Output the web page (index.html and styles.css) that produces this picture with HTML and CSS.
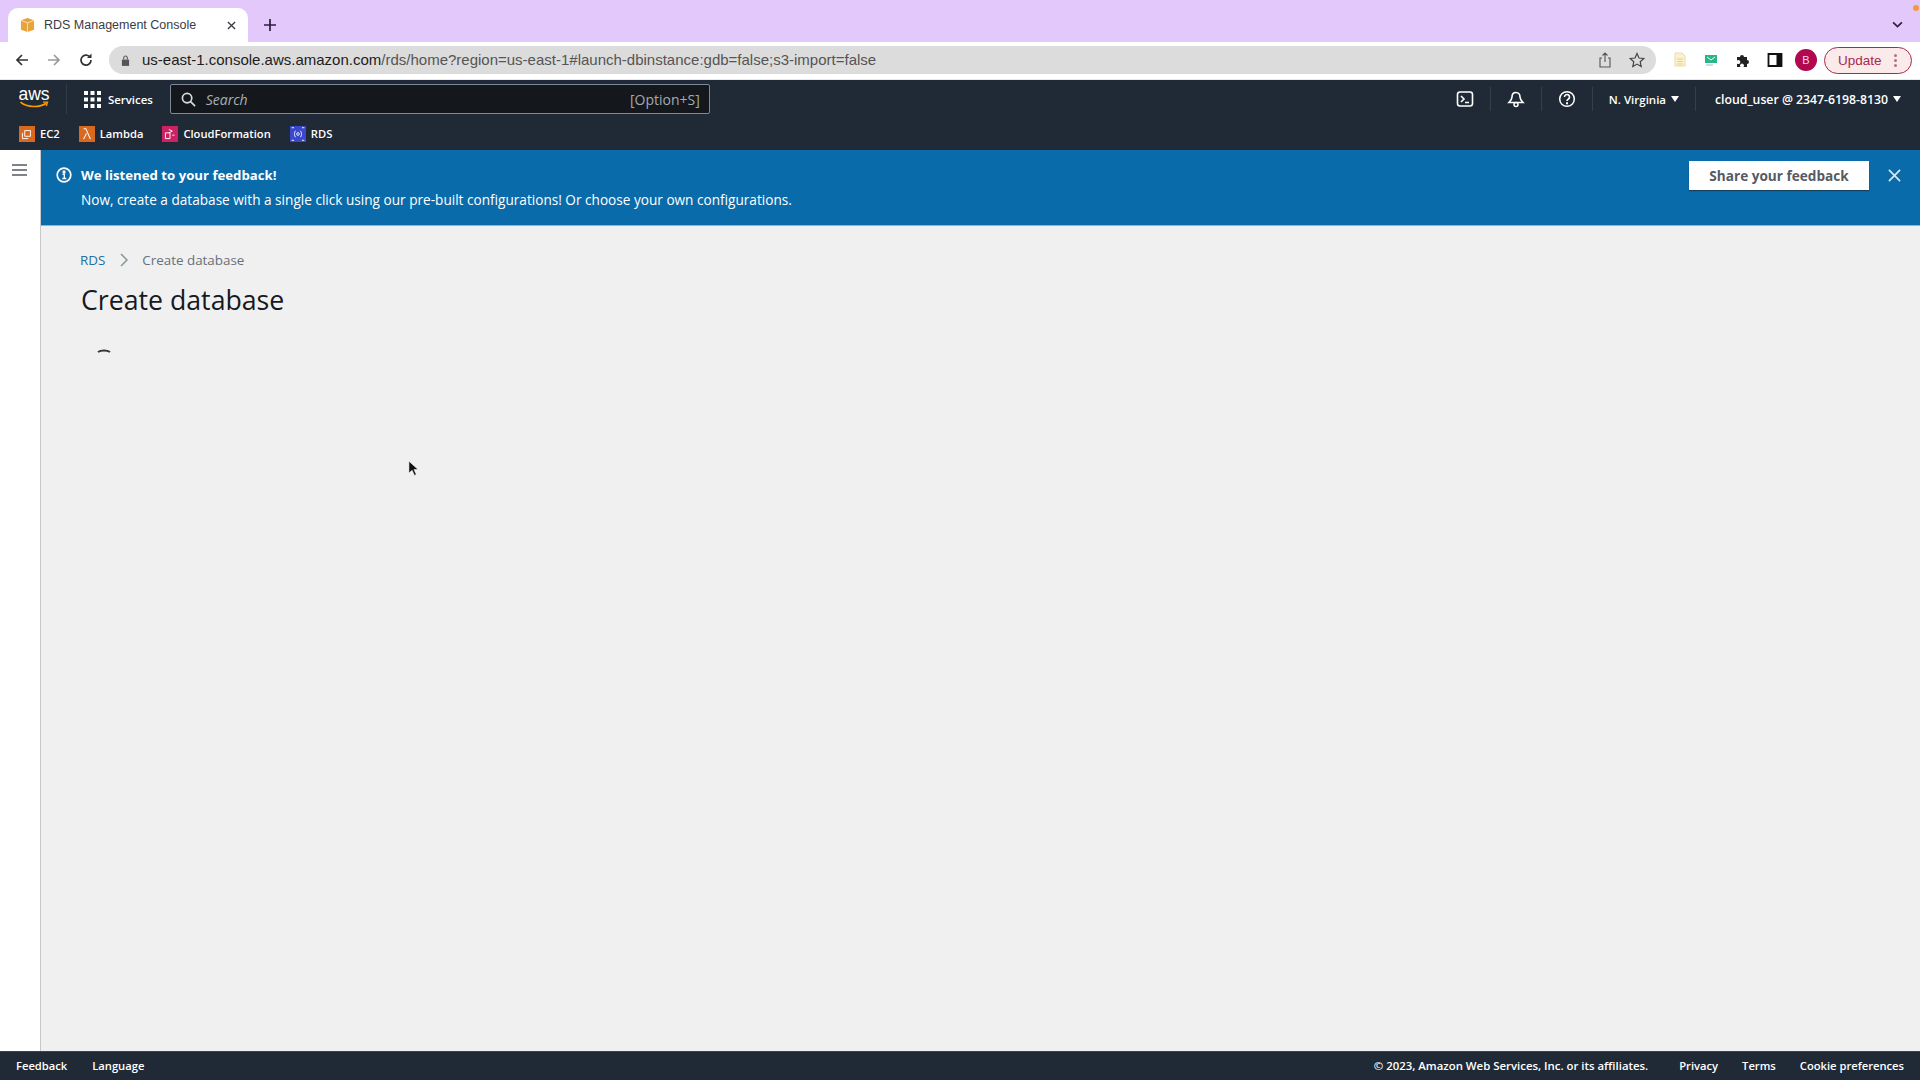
FILE: index.html
```
<!DOCTYPE html>
<html lang="en">
<head>
<meta charset="utf-8">
<title>RDS Management Console</title>
<link rel="stylesheet" href="styles.css">
</head>
<body>
<div class="tabstrip">
  <div class="tab">
    <svg class="fav" viewBox="0 0 16 16"><path d="M8 0.500l7 2.500v10L8 15.500 1 13V3z" fill="#e8a33d"/><path d="M1 3l7 2.800L15 3M8 5.800v9.700" stroke="#fbe3b5" fill="none"/></svg>
    <span class="tabtitle">RDS Management Console</span>
    <svg class="tabx" viewBox="0 0 10 10"><path d="M1 1l8 8M9 1l-8 8" stroke="#3c3c44" stroke-width="1.500"/></svg>
  </div>
  <svg class="newtab" viewBox="0 0 12 12"><path d="M6 0v12M0 6h12" stroke="#2c1f3d" stroke-width="1.700"/></svg>
  <div class="stripend">
    <svg class="chev" viewBox="0 0 10 6"><path d="M1 1l4 4 4-4" stroke="#2c1f3d" stroke-width="1.500" fill="none"/></svg>
  </div>
  <span class="orangedot"></span>
</div>
<div class="toolbar">
  <svg class="tool" viewBox="0 0 16 16"><path d="M14 8H3M8 3L3 8l5 5" stroke="#333" stroke-width="1.700" fill="none"/></svg>
  <svg class="tool" viewBox="0 0 16 16"><path d="M2 8h11M8 3l5 5-5 5" stroke="#9a9a9a" stroke-width="1.700" fill="none"/></svg>
  <svg class="tool" viewBox="0 0 16 16"><path d="M13 8a5 5 0 1 1-1.500-3.500" stroke="#333" stroke-width="1.700" fill="none"/><path d="M13.500 1.500v4.500H9z" fill="#333"/></svg>
  <div class="omnibox">
    <svg class="lock" viewBox="0 0 10 12"><path d="M1 5h8v7H1z" fill="#555"/><path d="M3 5V3a2 2 0 0 1 4 0v2" stroke="#555" stroke-width="1.200" fill="none"/></svg>
    <span class="url"><span class="urlhost">us-east-1.console.aws.amazon.com</span>/rds/home?region=us-east-1#launch-dbinstance:gdb=false;s3-import=false</span>
    <svg class="omnicon share" viewBox="0 0 14 16"><path d="M4 6H2v9h10V6h-2M7 10V1M4.500 3.500L7 1l2.500 2.500" stroke="#555" stroke-width="1.100" fill="none"/></svg>
    <svg class="omnicon star" viewBox="0 0 16 16"><path d="M8 1.500l2 4.500 4.800.5-3.600 3.200 1 4.800L8 12.100 3.800 14.500l1-4.800L1.200 6.500 6 6z" stroke="#444" stroke-width="1.200" fill="none"/></svg>
  </div>
  <div class="exts">
    <svg class="ext" viewBox="0 0 16 16"><path d="M4 1h7l3 3v10H4z" fill="#fbf1cf" stroke="#eadca8"/><path d="M6 7h6M6 9.500h6M6 12h6" stroke="#e0cf96"/></svg>
    <svg class="ext" viewBox="0 0 16 16"><path d="M2 3h12v8H2z" fill="#2bb38a"/><path d="M4 5l4 3 4-3" stroke="#fff" fill="none"/><path d="M3 13h7" stroke="#9bc" stroke-width="1"/></svg>
    <svg class="ext" viewBox="0 0 16 16"><path d="M2 5h3a2 2 0 1 1 4 0h3v3a2 2 0 1 1 0 4v3H8.500a2 2 0 1 0-3 0H2v-3.500a2 2 0 1 0 0-3z" fill="#222"/></svg>
    <svg class="ext" viewBox="0 0 16 16"><path d="M1.500 2h13v12h-13z" fill="#fff" stroke="#111" stroke-width="1.800"/><path d="M9.500 2h5v12h-5z" fill="#111"/></svg>
    <span class="avatar">B</span>
    <span class="update">Update<span class="updots"><i></i><i></i><i></i></span></span>
  </div>
</div>
<header class="awsnav">
  <div class="navrow1">
    <div class="awslogo">
      <span class="awstext">aws</span>
      <svg class="smile" viewBox="0 0 26 8"><path d="M1 1c6 5 17 5 23 1" stroke="#f90" stroke-width="1.500" fill="none"/><path d="M21 1l4 0-1 3.500" stroke="#f90" stroke-width="1.200" fill="none"/></svg>
    </div>
    <span class="navsep"></span>
    <svg class="grid" viewBox="0 0 17 17"><path d="M0 0h4v4H0zM6.500 0h4v4h-4zM13 0h4v4h-4zM0 6.500h4v4H0zM6.500 6.500h4v4h-4zM13 6.500h4v4h-4zM0 13h4v4H0zM6.500 13h4v4h-4zM13 13h4v4h-4z" fill="#fff"/></svg>
    <span class="services">Services</span>
    <div class="searchbox">
      <svg class="searchicon" viewBox="0 0 16 16"><circle cx="6.500" cy="6.500" r="5" stroke="#d5dbdb" stroke-width="1.800" fill="none"/><path d="M10 10l5 5" stroke="#d5dbdb" stroke-width="1.800"/></svg>
      <span class="searchph">Search</span>
      <span class="searchkey">[Option+S]</span>
    </div>
    <div class="navright">
      <div class="navicon"><svg viewBox="0 0 18 18"><rect x="1.500" y="2" width="15" height="14" rx="2.500" stroke="#fff" stroke-width="1.600" fill="none"/><path d="M5 6l3 3-3 3M9 12.500h4" stroke="#fff" stroke-width="1.600" fill="none"/></svg></div>
      <span class="navdiv"></span>
      <div class="navicon"><svg viewBox="0 0 18 18"><path d="M9 2.500c-2.500 0-4 2-4 4.500 0 2-1 3.500-3 5.500h14c-2-2-3-3.500-3-5.500 0-2.500-1.500-4.500-4-4.500z" stroke="#fff" stroke-width="1.600" fill="none"/><circle cx="9" cy="14.500" r="2" fill="none" stroke="#fff" stroke-width="1.500"/></svg></div>
      <span class="navdiv"></span>
      <div class="navicon"><svg viewBox="0 0 18 18"><circle cx="9" cy="9" r="7.300" stroke="#fff" stroke-width="1.500" fill="none"/><path d="M6.500 7a2.500 2.500 0 1 1 3.800 2.100c-.9.600-1.300 1-1.300 2" stroke="#fff" stroke-width="1.600" fill="none"/><path d="M8 12.300h2v2H8z" fill="#fff"/></svg></div>
      <span class="navdiv"></span>
      <span class="navmenu region">N. Virginia<i class="caret"></i></span>
      <span class="navdiv"></span>
      <span class="navmenu account">cloud_user @ 2347-6198-8130<i class="caret"></i></span>
    </div>
  </div>
  <div class="navrow2">
    <span class="fav2"><svg class="svc" viewBox="0 0 14 14"><rect width="14" height="14" fill="#d9691e"/><path d="M5 4h5v5H5zM3 6v5h5" stroke="#fff" stroke-width=".8" fill="none"/></svg>EC2</span>
    <span class="fav2"><svg class="svc" viewBox="0 0 14 14"><rect width="14" height="14" fill="#d9691e"/><path d="M4 2.500h2l4 9M6.500 6.500L4 11.500" stroke="#fff" stroke-width=".9" fill="none"/></svg>Lambda</span>
    <span class="fav2"><svg class="svc" viewBox="0 0 14 14"><rect width="14" height="14" fill="#cc2264"/><path d="M3 6h4v5H3zM6 3l3 1.500L6 6M9 8h2" stroke="#fff" stroke-width=".8" fill="none"/></svg>CloudFormation</span>
    <span class="fav2"><svg class="svc" viewBox="0 0 14 14"><rect width="14" height="14" fill="#3b48cc"/><path d="M5 4.500c-1.500 0-.5 2.500-1.500 2.500 1 0 0 2.500 1.500 2.500M9 4.500c1.500 0 .5 2.500 1.500 2.500-1 0 0 2.500-1.500 2.500M1.500 1.500h2M10.500 1.500h2M1.500 12.500h2M10.500 12.500h2" stroke="#fff" stroke-width=".8" fill="none"/><circle cx="7" cy="7" r="1.200" fill="none" stroke="#fff" stroke-width=".7"/></svg>RDS</span>
  </div>
</header>
<div class="main">
  <aside class="sidebar">
    <svg class="burger" viewBox="0 0 15 12"><path d="M0 1h15M0 6h15M0 11h15" stroke="#545b64" stroke-width="1.600"/></svg>
  </aside>
  <div class="content">
    <div class="banner">
      <svg class="infoicon" viewBox="0 0 16 16"><circle cx="8" cy="8" r="6.800" stroke="#fff" stroke-width="1.700" fill="none"/><path d="M6.500 7.300H8.300v4M6.300 11.500h4M7.300 4.200h1.500v1.600H7.300z" stroke="#fff" stroke-width="1.300" fill="none"/></svg>
      <div class="bannertext">
        <div class="bannertitle">We listened to your feedback!</div>
        <div class="bannerbody">Now, create a database with a single click using our pre-built configurations! Or choose your own configurations.</div>
      </div>
      <span class="sharebtn">Share your feedback</span>
      <svg class="closex" viewBox="0 0 14 14"><path d="M1 1l12 12M13 1L1 13" stroke="#d5e9f5" stroke-width="1.800"/></svg>
    </div>
    <div class="page">
      <nav class="crumbs">
        <span class="crumblink">RDS</span>
        <svg class="crumbsep" viewBox="0 0 8 14"><path d="M1 1l6 6-6 6" stroke="#879596" stroke-width="1.500" fill="none"/></svg>
        <span class="crumbcur">Create database</span>
      </nav>
      <h1 class="title">Create database</h1>
      <svg class="spinner" viewBox="0 0 14 4"><path d="M1 3c3-2 9-2 12 0" stroke="#333" stroke-width="2" fill="none"/></svg>
    </div>
    <svg class="cursor" viewBox="0 0 12 18"><path d="M1 1v13l3.500-3 2.500 5.500 2-1-2.500-5.300H11z" fill="#111" stroke="#fff" stroke-width=".6"/></svg>
  </div>
</div>
<footer class="foot">
  <span class="footl">Feedback</span>
  <span class="footl">Language</span>
  <span class="copy">© 2023, Amazon Web Services, Inc. or its affiliates.</span>
  <span class="footr">Privacy</span>
  <span class="footr">Terms</span>
  <span class="footr">Cookie preferences</span>
</footer>
</body>
</html>
```
FILE: styles.css
```
* { box-sizing: border-box; }
html, body { margin: 0; height: 100%; overflow: hidden; }
body { display: flex; flex-direction: column; width: 1920px; height: 1080px; background: #fff; font-family: "Open Sans", "Noto Sans", sans-serif; }
.tabstrip { height: 42px; background: #e3c8fc; display: flex; align-items: flex-end; padding-left: 8px; position: relative; flex: none; }
.tab { width: 240px; height: 34px; background: #fff; border-radius: 10px 10px 0 0; display: flex; align-items: center; padding: 0 12px 0 12px; }
.fav { width: 15px; height: 16px; margin-right: 9px; margin-left: 0; }
.tabtitle { font: 12.500px "Liberation Sans", Arial, sans-serif; color: #3c3c44; flex: 1; white-space: nowrap; }
.tabx { width: 9px; height: 9px; }
.newtab { width: 12px; height: 12px; margin: 0 0 11px 16px; }
.stripend { margin-left: auto; padding: 0 17px 14px 0; display: flex; }
.chev { width: 11px; height: 7px; }
.orangedot { position: absolute; right: 1px; top: 5px; width: 6px; height: 6px; background: #ef9b3d; border-radius: 50%; }
.toolbar { height: 37px; flex: none; background: #fff; display: flex; align-items: center; padding: 4px 8px 5px 14px; }
.tool { width: 16px; height: 16px; margin-right: 16px; }
.tool:nth-child(3) { margin-right: 15px; }
.omnibox { width: 1547px; height: 28px; background: #dcdcdc; border-radius: 14px; display: flex; align-items: center; padding: 0 11px 0 12px; }
.lock { width: 9px; height: 11px; margin-right: 12px; }
.url { font: 15px/17px "Liberation Sans", Arial, sans-serif; color: #555; flex: 1; white-space: nowrap; padding-bottom: 1px; }
.urlhost { color: #1d1d1d; }
.omnicon { height: 16px; width: 14px; }
.share { margin-right: 17px; }
.star { width: 16px; }
.exts { display: flex; align-items: center; margin-left: 15px; }
.ext { width: 16px; height: 16px; margin-right: 16px; }
.avatar { width: 22px; height: 22px; border-radius: 50%; background: #b1084f; color: #f7d9e4; font: 11px "Liberation Sans", Arial, sans-serif; display: flex; align-items: center; justify-content: center; margin: 0 7px 0 -4px; }
.update { width: 88px; height: 27px; border: 1px solid #a8284f; border-radius: 14px; background: #fbeaea; color: #a8284f; font: 13.500px "Liberation Sans", Arial, sans-serif; display: flex; align-items: center; padding-left: 13px; position: relative; }
.updots { display: flex; flex-direction: column; gap: 2px; margin-left: 12px; }
.updots i { width: 3px; height: 3px; border-radius: 50%; background: #b0728a; }
.awsnav { background: #1f2a36; height: 71px; flex: none; border-top: 1px solid #e8e8e8; }
.navrow1 { height: 38px; display: flex; align-items: center; padding-left: 18px; color: #fff; }
.awslogo { width: 32px; height: 30px; position: relative; display: flex; flex-direction: column; align-items: center; }
.awstext { font: 17.500px/18px "Liberation Sans", Arial, sans-serif; color: #fff; margin-top: 1px; }
.smile { width: 32px; height: 9px; margin-top: -2px; }
.navsep { width: 1px; height: 30px; background: #2f3b48; margin: 0 17px 0 16px; }
.grid { width: 17px; height: 17px; }
.services { font-size: 11.400px; font-weight: 600; margin: 0 17px 0 7px; color: #fff; }
.searchbox { width: 540px; height: 30px; background: #14181c; border: 1px solid #7d8998; border-radius: 2px; display: flex; align-items: center; padding: 0 9px 0 10px; }
.searchicon { width: 15px; height: 15px; }
.searchph { font-size: 14px; font-style: italic; color: #a9b0b5; margin-left: 10px; flex: 1; }
.searchkey { font-size: 14px; color: #a3aab0; }
.navright { margin-left: auto; display: flex; align-items: center; padding-right: 19px; }
.navicon { width: 18px; height: 18px; display: flex; }
.navdiv { width: 1px; height: 24px; background: #333f4c; margin: 0 16px; }
.navmenu { font-size: 11.500px; font-weight: 600; color: #fff; white-space: nowrap; display: flex; align-items: center; }
.account { font-size: 12.250px; }
.region + .navdiv { margin: 0 19px 0 16px; }
.caret { width: 0; height: 0; border-left: 4.500px solid transparent; border-right: 4.500px solid transparent; border-top: 6px solid #fff; margin-left: 5px; }
.navrow2 { height: 32px; display: flex; align-items: center; padding: 0 0 1px 19px; gap: 19px; }
.fav2 { font-size: 11.200px; font-weight: 600; color: #fff; display: flex; align-items: center; gap: 5px; }
.svc { width: 16px; height: 16px; }
.main { flex: 1; display: flex; min-height: 0; }
.sidebar { width: 41px; background: #fff; border-right: 1px solid #c6c8ca; flex: none; padding: 14px 0 0 12px; }
.burger { display: block; width: 15px; height: 12px; }
.content { flex: 1; background: #f0f0f0; position: relative; }
.banner { height: 76px; background: #0a6bab; border-bottom: 1px solid #8fb3cc; display: flex; padding: 0 12px 0 15px; align-items: flex-start; color: #fff; }
.infoicon { width: 16px; height: 16px; margin: 17px 9px 0 0; flex: none; }
.bannertext { flex: 1; padding-top: 15px; }
.bannertitle { font-size: 13.200px; line-height: 20px; font-weight: 700; }
.bannerbody { font-size: 13.620px; line-height: 20px; margin-top: 5px; font-weight: 500; }
.sharebtn { width: 180px; height: 29px; background: #fff; color: #545b64; font-size: 13.600px; font-weight: 700; display: flex; align-items: center; justify-content: center; margin-top: 11px; box-shadow: 0 1px 1px #14405f; }
.closex { width: 13px; height: 13px; margin: 19px 7px 0 19px; }
.page { padding: 24px 0 0 39px; }
.crumbs { display: flex; align-items: center; height: 20px; font-size: 13.400px; }
.crumblink { color: #1f6f9f; }
.crumbsep { width: 8px; height: 14px; margin: 0 14px 0 15px; }
.crumbcur { color: #687078; }
.title { margin: 11px 0 0 1px; font-size: 26.700px; line-height: 38px; font-weight: 400; color: #16191f; }
.spinner { display: block; width: 14px; height: 4px; margin: 30px 0 0 17px; }
.cursor { position: absolute; left: 367px; top: 310px; width: 11px; height: 17px; }
.foot { height: 29px; flex: none; background: #1f2a36; border-top: 1px solid #3a4552; display: flex; align-items: center; padding: 0 16px 1px; color: #fff; font-size: 11.200px; font-weight: 600; }
.footl { margin-right: 25px; }
.copy { margin-left: auto; margin-right: 31px; font-size: 11.400px; }
.footr { margin-left: 0; margin-right: 24px; }
.footr:last-child { margin-right: 0; }
```
